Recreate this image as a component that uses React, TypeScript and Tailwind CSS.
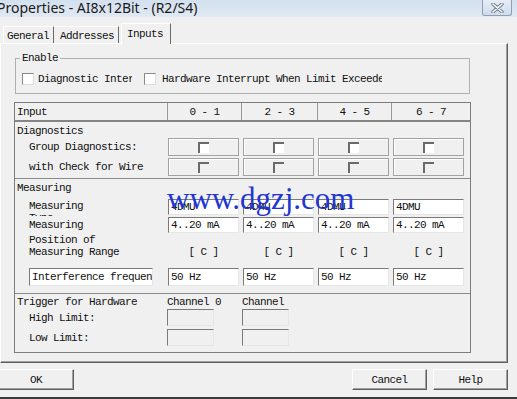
import React from "react";

const COLS = ["0 - 1", "2 - 3", "4 - 5", "6 - 7"];

const sunken =
  "border border-t-[#7a7a7a] border-l-[#7a7a7a] border-r-[#e6e6e6] border-b-[#e6e6e6]";

/* ─── small pieces ─── */
function Field({ text, className = "" }: { text: string; className?: string }) {
  return (
    <div className={`flex h-[16px] w-[71px] items-center bg-white pl-[2px] ${sunken} ${className}`}>
      <span className="whitespace-nowrap">{text}</span>
    </div>
  );
}

function CheckCell({ disabled }: { disabled?: boolean }) {
  return (
    <div className="flex h-[18px] w-[71px] items-center justify-center border border-[#a2a2a2] shadow-[inset_1px_1px_0_#ffffff]">
      <div
        className={`h-[11px] w-[11px] border-l-2 border-t-2 border-l-[#6a6a6a] border-t-[#6a6a6a] ${
          disabled ? "bg-[#f0f0f0]" : "bg-white"
        }`}
      />
    </div>
  );
}

function EnableBox() {
  return (
    <div className="h-[12px] w-[12px] shrink-0 border border-t-[#8a8a8a] border-l-[#8a8a8a] border-r-[#dcdcdc] border-b-[#dcdcdc] bg-white" />
  );
}

function Cells({ children }: { children: React.ReactNode }) {
  return <div className="grid grid-cols-[repeat(4,71px)] gap-x-[4px]">{children}</div>;
}

function Button({ label, className = "" }: { label: string; className?: string }) {
  return (
    <div
      className={`flex h-[21px] w-[75px] items-center justify-center border border-t-white border-l-white border-r-[#5f5f5f] border-b-[#5f5f5f] shadow-[inset_-1px_-1px_0_#a0a0a0] ${className}`}
    >
      {label}
    </div>
  );
}

export default function App() {
  return (
    <div className="relative flex h-[399px] w-[517px] flex-col overflow-hidden bg-[#f0f0f0] font-['Liberation_Mono',monospace] text-[11px] leading-[12px] tracking-[-0.6px] text-[#111]">
      {/* title bar */}
      <div className="flex h-[17px] shrink-0 items-start justify-between bg-gradient-to-b from-[#d3e0ee] to-[#e0e9f3]">
        <span className="ml-[-3px] mt-[-2px] whitespace-nowrap font-['Noto_Sans',sans-serif] text-[14px] leading-[20px] tracking-normal text-[#1a1a1a]">
          Properties - AI8x12Bit - (R2/S4)
        </span>
        <div className="mr-[5px] flex h-[16px] w-[30px] items-center justify-center rounded-b-[3px] border border-t-0 border-[#8da0b8] bg-gradient-to-b from-[#e6edf6] to-[#d0dcea]">
          <svg width="13" height="10" viewBox="0 0 13 10">
            <path d="M2 1 L11 9 M11 1 L2 9" stroke="#6b7c92" strokeWidth="3.4" strokeLinecap="round" />
            <path d="M2 1 L11 9 M11 1 L2 9" stroke="#ffffff" strokeWidth="1.6" strokeLinecap="round" />
          </svg>
        </div>
      </div>

      {/* tabs */}
      <div className="flex h-[26px] shrink-0 items-end pl-[3px]">
        <div className="flex h-[17px] w-[51px] items-center border-l border-t border-r border-l-white border-t-white border-r-[#6a6a6a] pl-[3px] pt-[1px]">
          General
        </div>
        <div className="flex h-[17px] w-[65px] items-center border-t border-r border-t-white border-r-[#6a6a6a] pl-[6px] pt-[1px]">
          Addresses
        </div>
        <div className="relative z-10 mb-[-1px] ml-[2px] flex h-[21px] w-[50px] items-start border-l border-t border-r border-l-white border-t-white border-r-[#6a6a6a] bg-[#f0f0f0] pl-[5px] pt-[4px]">
          Inputs
        </div>
      </div>

      {/* tab panel */}
      <div className="flex h-[320px] w-[508px] shrink-0 flex-col border border-t-white border-l-white border-r-[#5e5e5e] border-b-[#5e5e5e] shadow-[inset_-1px_-1px_0_#a0a0a0]">
        <fieldset className="ml-[14px] mt-[8px] h-[42px] w-[455px] border border-[#b0b0b0] px-[4px]">
          <legend className="px-[2px] leading-[12px]">Enable</legend>
          <div className="ml-[2px] mt-[9px] flex items-center">
            <EnableBox />
            <span className="ml-[4px] w-[94px] overflow-hidden whitespace-nowrap">Diagnostic Interrupt</span>
            <div className="ml-[12px]">
              <EnableBox />
            </div>
            <span className="ml-[6px] w-[220px] overflow-hidden whitespace-nowrap">
              Hardware Interrupt When Limit Exceeded
            </span>
          </div>
        </fieldset>

        {/* parameter table */}
        <div className="ml-[13px] mt-[8px] w-[457px] border border-[#7c7c7c]">
          <div className="flex h-[19px] border-b-2 border-b-[#858585]">
            <div className="flex w-[153px] items-center border-r border-r-[#9a9a9a] pl-[2px]">Input</div>
            {COLS.map((c, i) => (
              <div
                key={c}
                className={`flex items-center justify-center ${
                  i === 0 ? "w-[74px]" : i === 1 ? "w-[76px]" : i === 2 ? "w-[74px]" : "w-[78px]"
                } ${i < 3 ? "border-r border-r-[#9a9a9a]" : ""}`}
              >
                {c}
              </div>
            ))}
          </div>

          {/* diagnostics */}
          <div className="flex flex-col border-b border-b-[#8a8a8a] pb-[2px] pt-[3px]">
            <div className="pl-[2px]">Diagnostics</div>
            <div className="mt-[1px] flex items-center">
              <div className="w-[153px] pl-[14px]">Group Diagnostics:</div>
              <Cells>
                {COLS.map((c) => (
                  <CheckCell key={c} />
                ))}
              </Cells>
            </div>
            <div className="mt-[2px] flex items-center">
              <div className="w-[153px] pl-[14px]">with Check for Wire</div>
              <Cells>
                {COLS.map((c) => (
                  <CheckCell key={c} disabled />
                ))}
              </Cells>
            </div>
          </div>

          {/* measuring */}
          <div className="flex flex-col border-b border-b-[#8a8a8a] pb-[7px] pt-[3px]">
            <div className="pl-[2px]">Measuring</div>
            <div className="mt-[5px] flex h-[18px] items-start">
              <div className="h-[17px] w-[153px] overflow-hidden pl-[14px] pt-[1px]">
                Measuring
                <br />
                Type
              </div>
              <Cells>
                {COLS.map((c) => (
                  <Field key={c} text="4DMU" />
                ))}
              </Cells>
            </div>
            <div className="flex items-center">
              <div className="w-[153px] pl-[14px]">Measuring</div>
              <Cells>
                {COLS.map((c) => (
                  <Field key={c} text="4..20 mA" />
                ))}
              </Cells>
            </div>
            <div className="mt-[1px] flex items-end">
              <div className="w-[153px] pl-[14px]">
                Position of
                <br />
                Measuring Range
              </div>
              <Cells>
                {COLS.map((c) => (
                  <div key={c} className="text-center">
                    [ C ]
                  </div>
                ))}
              </Cells>
            </div>
            <div className="mt-[10px] flex items-center">
              <div className="w-[153px] pl-[14px]">
                <div className="flex h-[18px] w-[124px] items-center overflow-hidden whitespace-nowrap bg-white pl-[2px] border border-t-[#7a7a7a] border-l-[#7a7a7a] border-r-[#e6e6e6] border-b-[#e6e6e6]">
                  Interference frequency
                </div>
              </div>
              <Cells>
                {COLS.map((c) => (
                  <Field key={c} text="50 Hz" className="h-[18px]" />
                ))}
              </Cells>
            </div>
          </div>

          {/* trigger */}
          <div className="flex flex-col pb-[6px] pt-[2px]">
            <div className="flex">
              <div className="w-[152px] pl-[2px]">Trigger for Hardware</div>
              <div className="w-[75px]">Channel 0</div>
              <div>Channel</div>
            </div>
            <div className="mt-[1px] flex items-center">
              <div className="w-[152px] pl-[14px]">High Limit:</div>
              <div className={`h-[17px] w-[47px] ${sunken}`} />
              <div className={`ml-[28px] h-[17px] w-[47px] ${sunken}`} />
            </div>
            <div className="mt-[3px] flex items-center">
              <div className="w-[152px] pl-[14px]">Low Limit:</div>
              <div className={`h-[17px] w-[47px] ${sunken}`} />
              <div className={`ml-[28px] h-[17px] w-[47px] ${sunken}`} />
            </div>
          </div>
        </div>
      </div>

      {/* dialog buttons */}
      <div className="mt-[6px] flex shrink-0">
        <Button label="OK" className="ml-[-2px] w-[76px]" />
        <Button label="Cancel" className="ml-[278px]" />
        <Button label="Help" className="ml-[6px]" />
      </div>
      <div className="mt-[7px] h-[2px] shrink-0 bg-[#3c3c3c]" />

      {/* watermark */}
      <div className="pointer-events-none absolute left-[167px] top-[183px] whitespace-nowrap font-['Liberation_Serif',serif] text-[31px] leading-[31px] tracking-normal text-[#2236d4]">
        www.dgzj.com
      </div>
    </div>
  );
}
